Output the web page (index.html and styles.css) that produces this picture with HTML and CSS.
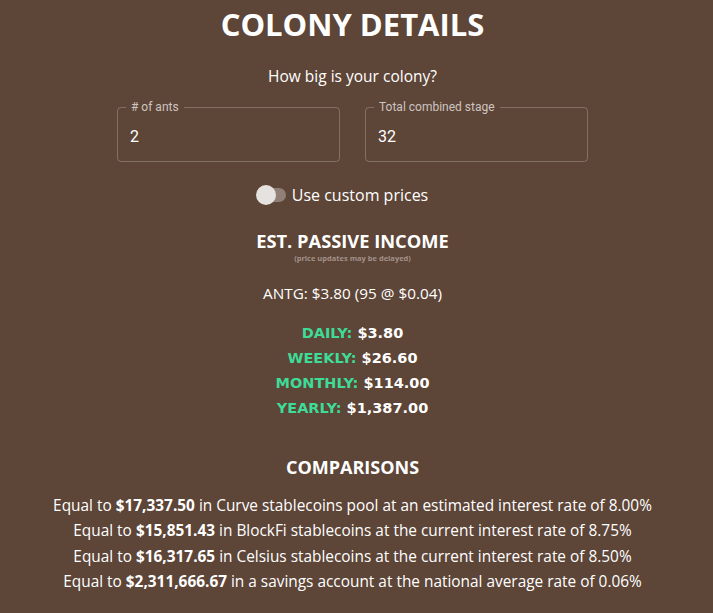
FILE: index.html
```html
<!DOCTYPE html>
<html lang="en">
<head>
  <meta charset="UTF-8">
  <meta name="viewport" content="width=device-width, initial-scale=1.0">
  <title>Colony Details</title>
  <link rel="stylesheet" href="styles.css">
</head>
<body>
  <div class="page">
    <h1 class="title">COLONY DETAILS</h1>
    <p class="question">How big is your colony?</p>

    <div class="fields">
      <fieldset class="field">
        <legend># of ants</legend>
        <span class="value">2</span>
      </fieldset>
      <fieldset class="field">
        <legend>Total combined stage</legend>
        <span class="value">32</span>
      </fieldset>
    </div>

    <label class="switch-row">
      <span class="switch"><span class="track"></span><span class="thumb"></span></span>
      <span class="switch-label">Use custom prices</span>
    </label>

    <h2 class="section">EST. PASSIVE INCOME</h2>
    <div class="note">(price updates may be delayed)</div>

    <p class="token">ANTG: $3.80 (95 @ $0.04)</p>

    <ul class="income">
      <li><span class="period">DAILY:</span> $3.80</li>
      <li><span class="period">WEEKLY:</span> $26.60</li>
      <li><span class="period">MONTHLY:</span> $114.00</li>
      <li><span class="period">YEARLY:</span> $1,387.00</li>
    </ul>

    <h2 class="section compare-title">COMPARISONS</h2>
    <ul class="compare">
      <li>Equal to <b>$17,337.50</b> in Curve stablecoins pool at an estimated interest rate of 8.00%</li>
      <li>Equal to <b>$15,851.43</b> in BlockFi stablecoins at the current interest rate of 8.75%</li>
      <li>Equal to <b>$16,317.65</b> in Celsius stablecoins at the current interest rate of 8.50%</li>
      <li>Equal to <b>$2,311,666.67</b> in a savings account at the national average rate of 0.06%</li>
    </ul>
  </div>
</body>
</html>
```
FILE: styles.css
```css
body {
  margin: 0;
  background-color: #5d4537;
  color: #ffffff;
  font-family: 'Open Sans', 'Noto Sans', sans-serif;
}
.page {
  display: flex;
  flex-direction: column;
  align-items: center;
  padding-right: 8px;
  text-align: center;
}
.title {
  margin: 4px 0 0;
  font-size: 31px;
  font-weight: 700;
  line-height: 40px;
}
.question {
  margin: 22px 0 0;
  font-size: 15.5px;
  line-height: 20px;
}

/* outlined text fields */
.fields {
  display: flex;
  gap: 25px;
  margin-top: 15px;
}
.field {
  width: 223px;
  height: 61px;
  box-sizing: border-box;
  margin: 0;
  padding: 0 8px;
  border: 1px solid rgba(255, 255, 255, 0.23);
  border-radius: 4px;
  text-align: left;
  font-family: Roboto, sans-serif;
}
.field legend {
  margin-left: 0;
  padding: 0 5px;
  font-size: 12px;
  line-height: 12px;
  color: rgba(255, 255, 255, 0.7);
}
.field .value {
  display: block;
  margin: 14px 0 0 4px;
  font-size: 16px;
  line-height: 20px;
}

/* switch */
.switch-row {
  display: flex;
  align-items: center;
  margin-top: 22px;
  margin-right: 21px;
}
.switch {
  position: relative;
  width: 32px;
  height: 20px;
  margin-right: 4px;
}
.track {
  position: absolute;
  left: 6px;
  top: 3px;
  width: 24px;
  height: 14px;
  border-radius: 7px;
  background-color: #8f7f76;
}
.thumb {
  position: absolute;
  left: 0;
  top: 0;
  width: 20px;
  height: 20px;
  border-radius: 50%;
  background-color: #e6e2e0;
}
.switch-label {
  font-size: 16px;
}

.section {
  margin: 23px 0 0;
  font-size: 18.3px;
  line-height: 24px;
  font-weight: 700;
}
.note {
  font-size: 7.5px;
  font-weight: 700;
  line-height: 10px;
  color: #a39189;
}
.token {
  margin: 20px 0 0;
  font-size: 15.3px;
  line-height: 20px;
}

.income {
  list-style: none;
  margin: 18px 0 0;
  padding: 0;
  font-family: 'DejaVu Sans', sans-serif;
  font-weight: 700;
  font-size: 14.5px;
  line-height: 25px;
}
.period {
  color: #3ddc97;
}

.compare-title {
  margin-top: 34px;
  font-size: 18px;
}
.compare {
  list-style: none;
  margin: 14px 0 0;
  padding: 0;
  font-size: 15.4px;
  line-height: 25.3px;
}
.compare b {
  font-weight: 700;
}
```
